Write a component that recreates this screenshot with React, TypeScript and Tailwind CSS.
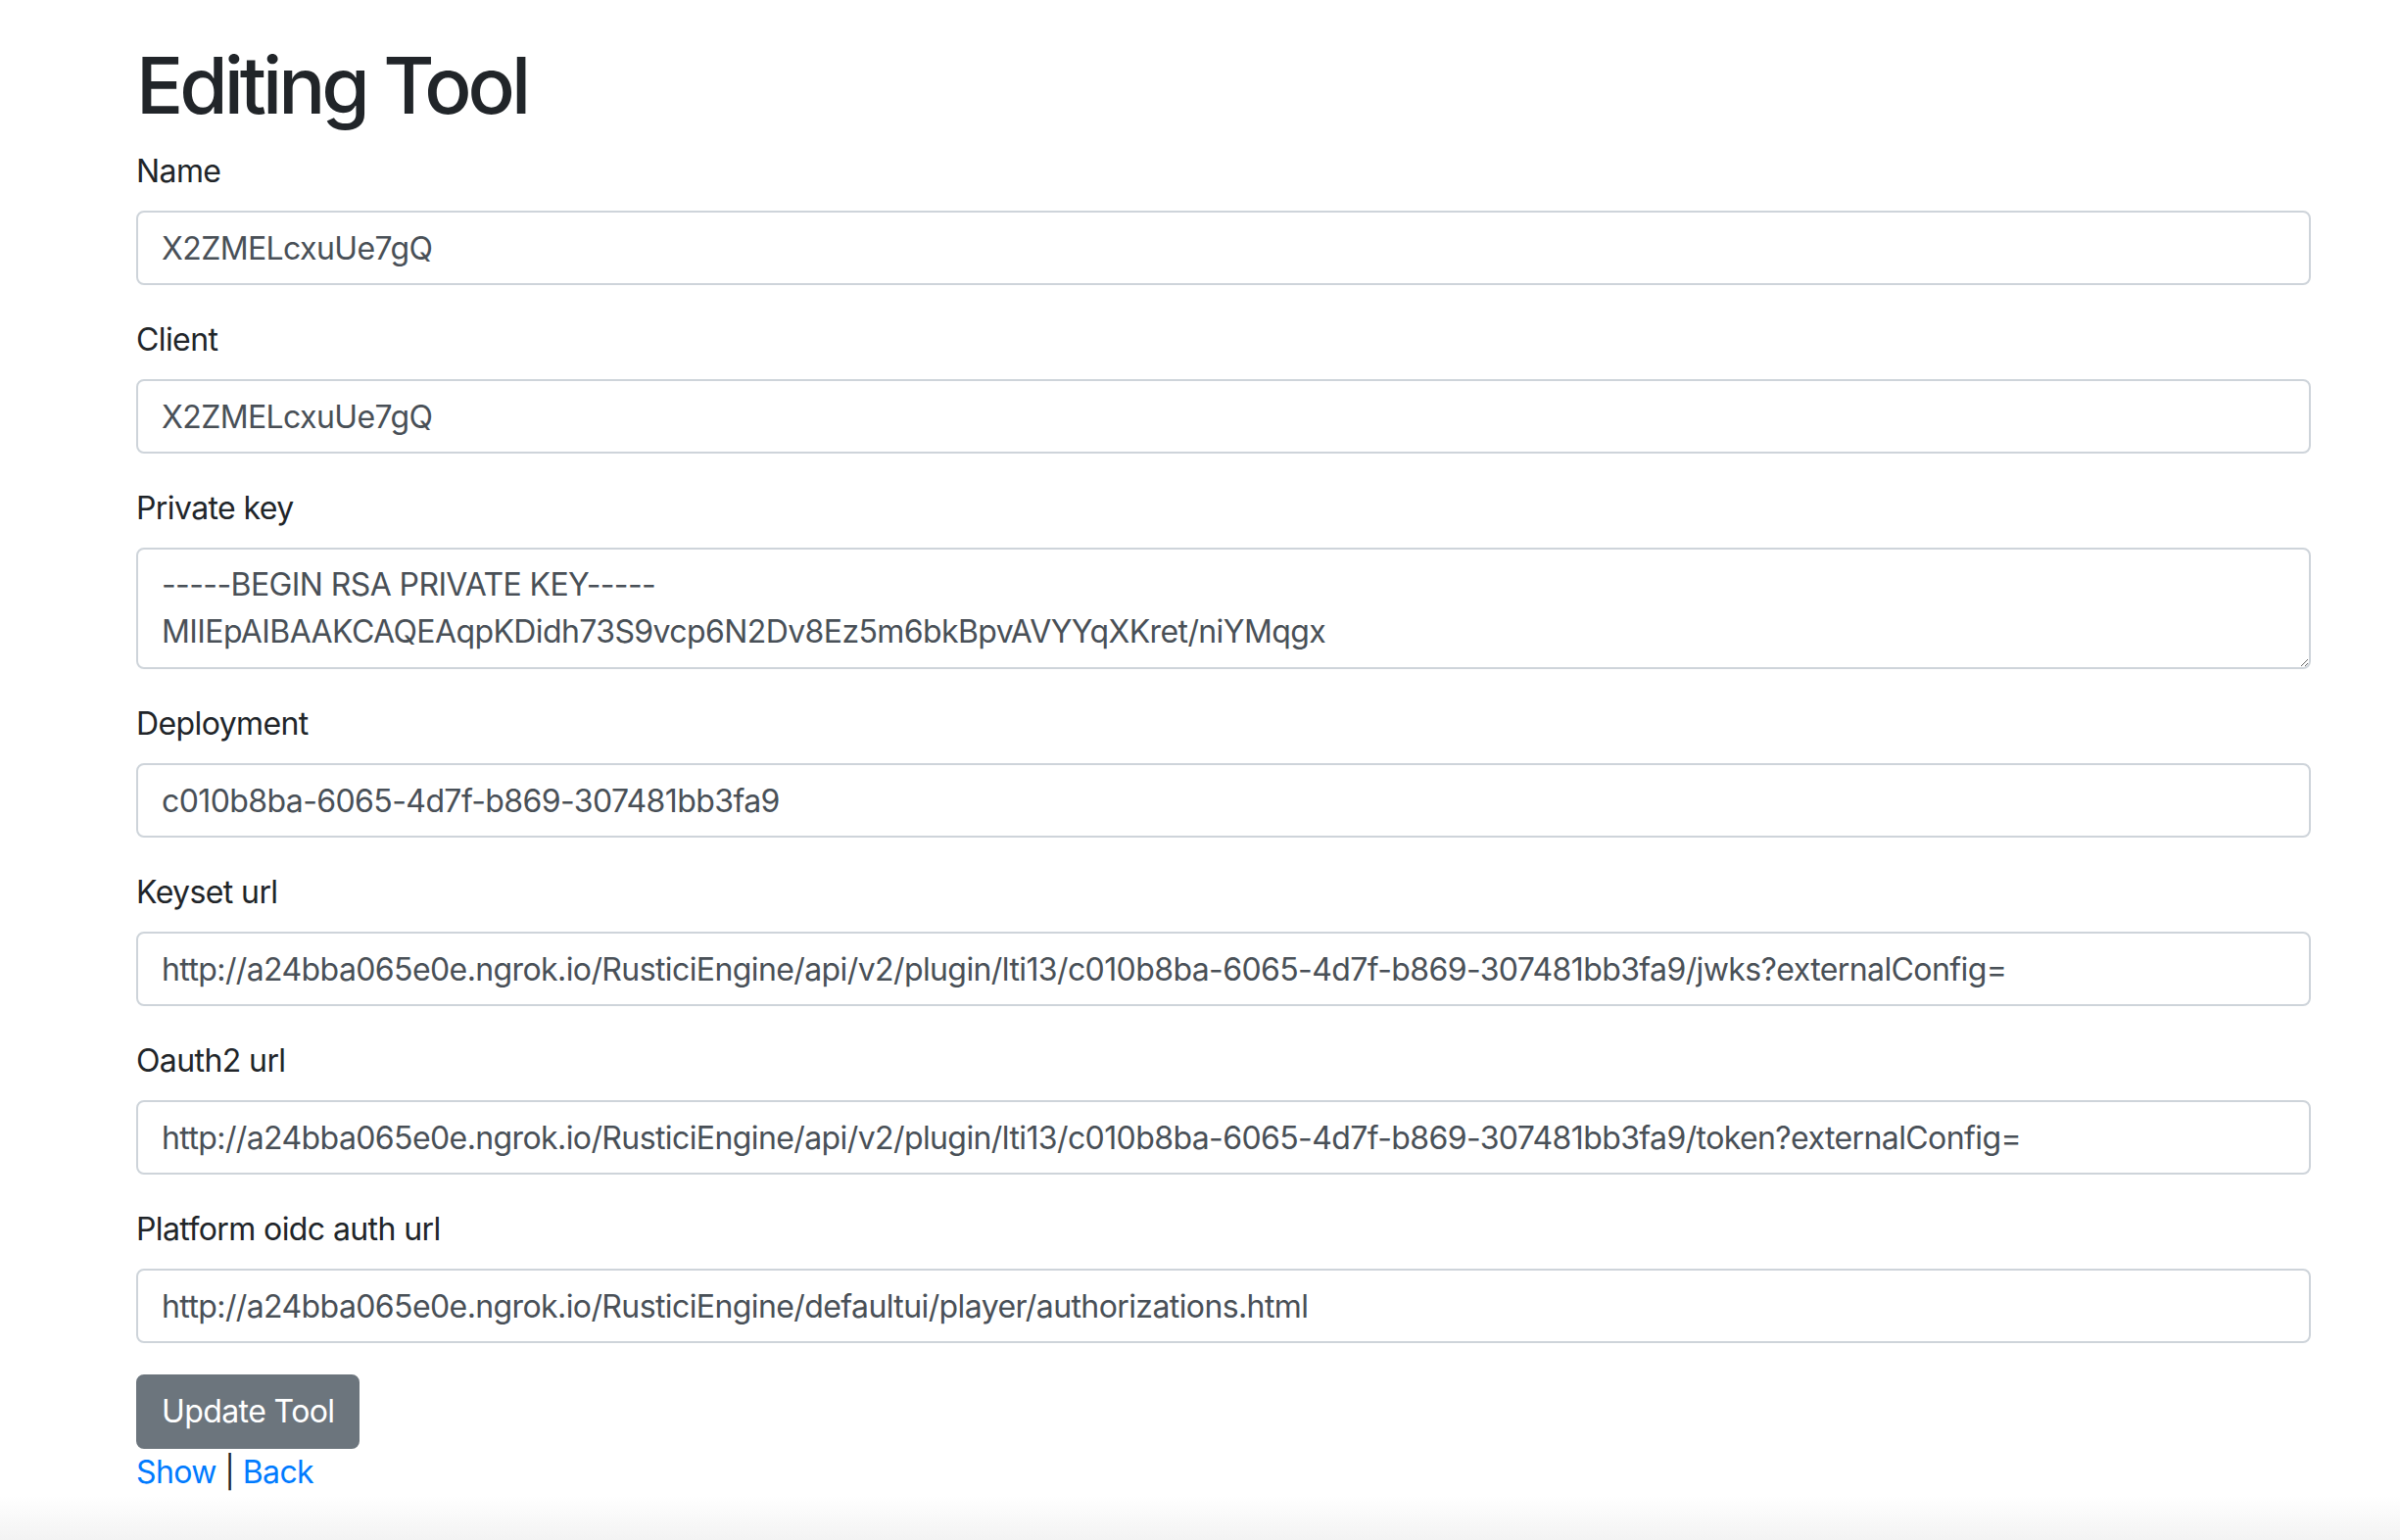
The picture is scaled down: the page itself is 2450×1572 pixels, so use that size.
import React from "react";

const fields: { label: string; value: string }[] = [
  { label: "Deployment", value: "c010b8ba-6065-4d7f-b869-307481bb3fa9" },
  {
    label: "Keyset url",
    value:
      "http://a24bba065e0e.ngrok.io/RusticiEngine/api/v2/plugin/lti13/c010b8ba-6065-4d7f-b869-307481bb3fa9/jwks?externalConfig=",
  },
  {
    label: "Oauth2 url",
    value:
      "http://a24bba065e0e.ngrok.io/RusticiEngine/api/v2/plugin/lti13/c010b8ba-6065-4d7f-b869-307481bb3fa9/token?externalConfig=",
  },
  {
    label: "Platform oidc auth url",
    value: "http://a24bba065e0e.ngrok.io/RusticiEngine/defaultui/player/authorizations.html",
  },
];

function Field({ label, value }: { label: string; value: string }) {
  return (
    <div className="mb-[32px] flex flex-col">
      <label className="mb-[16px] block h-[48px] text-[32px] leading-[48px] tracking-[-0.6px] text-[#212529]">{label}</label>
      <input
        readOnly
        defaultValue={value}
        className="block h-[76px] w-full rounded-[8px] border-2 border-[#ced4da] bg-white px-[24px] py-[12px] text-[32px] leading-[48px] tracking-[-0.6px] text-[#495057] outline-none"
      />
    </div>
  );
}

export default function App() {
  return (
    <div
      className="flex min-h-[1572px] w-full flex-col bg-white tracking-[-0.6px]"
      style={{ fontFamily: 'Inter, "Noto Sans", "Liberation Sans", sans-serif' }}
    >
      <div className="ml-[139px] w-[2220px] pt-[39px]">
        <h1 className="mb-[16px] text-[80px] font-medium leading-[96px] tracking-[-4px] text-[#212529]">Editing Tool</h1>
        <Field label="Name" value="X2ZMELcxuUe7gQ" />
        <Field label="Client" value="X2ZMELcxuUe7gQ" />
        <div className="mb-[32px] flex flex-col">
          <label className="mb-[16px] block h-[48px] text-[32px] leading-[48px] tracking-[-0.6px] text-[#212529]">Private key</label>
          <textarea
            readOnly
            rows={2}
            defaultValue={
              "-----BEGIN RSA PRIVATE KEY-----\nMIIEpAIBAAKCAQEAqpKDidh73S9vcp6N2Dv8Ez5m6bkBpvAVYYqXKret/niYMqgx"
            }
            className="block h-[124px] w-full resize-y overflow-hidden rounded-[8px] border-2 border-[#ced4da] bg-white px-[24px] py-[12px] text-[32px] leading-[48px] tracking-[-0.6px] text-[#495057] outline-none"
          />
        </div>
        {fields.map((f) => (
          <Field key={f.label} label={f.label} value={f.value} />
        ))}
        <button className="block h-[76px] rounded-[8px] border-2 border-[#6c757d] bg-[#6c757d] px-[24px] text-[32px] leading-[48px] tracking-[-0.6px] text-white">
          Update Tool
        </button>
        <div className="h-[48px] text-[32px] leading-[48px] tracking-[-0.6px] text-[#212529]">
          <a className="text-[#007bff]">Show</a> | <a className="text-[#007bff]">Back</a>
        </div>
      </div>
      <div className="mt-auto h-[45px] w-full bg-gradient-to-b from-white to-[#f3f3f3]" />
    </div>
  );
}
